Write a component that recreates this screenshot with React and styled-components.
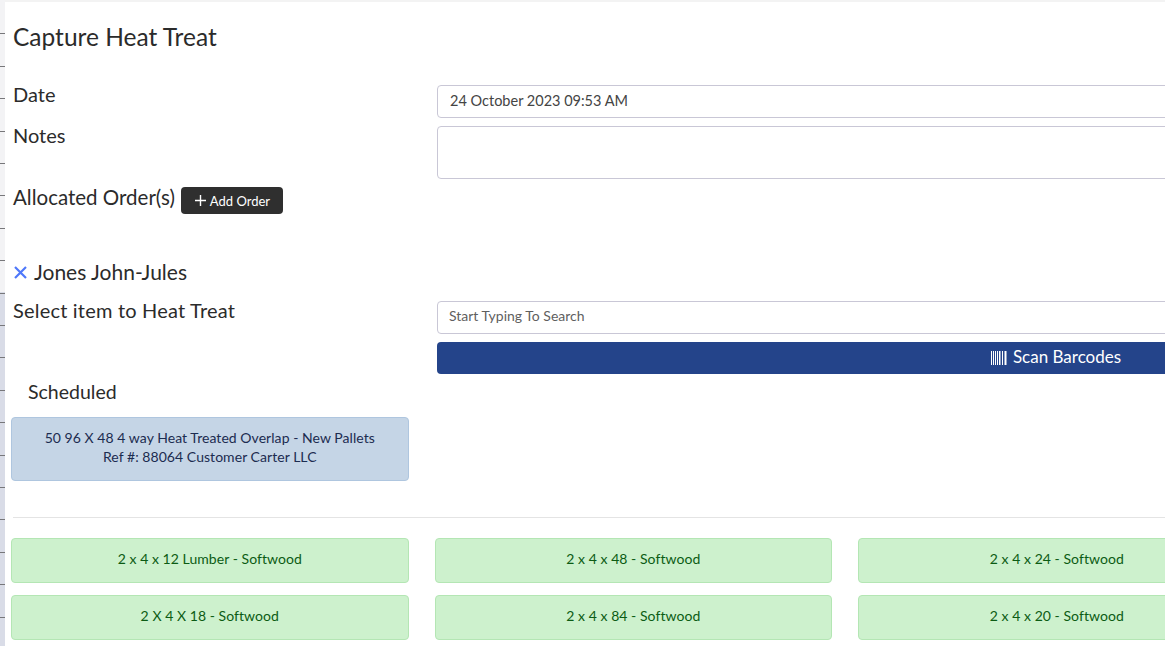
import React from 'react';
import styled, { createGlobalStyle } from 'styled-components';

const GlobalStyle = createGlobalStyle`
  html, body {
    margin: 0;
    height: 100%;
    overflow: hidden;
    background: #fff;
  }
  body {
    font-family: "Lato", "Noto Sans", sans-serif;
    color: #2b2b2b;
  }
`;

const Shell = styled.div`
  display: flex;
  width: 1700px;
  height: 646px;
  overflow: hidden;
`;

const SideStrip = styled.div`
  flex: 0 0 5px;
  background-image:
    repeating-linear-gradient(to bottom, transparent 0 31.4px, #77777a 31.4px 32.4px),
    linear-gradient(to bottom, #f3f3f5 0 292px, #d9dce7 292px 100%);
  background-position: 0 1.6px, 0 0;
  background-size: 100% 100%;
  background-repeat: no-repeat;
`;

const Main = styled.main`
  flex: 1;
  padding-top: 2px;
  background: linear-gradient(#f3f3f3, #f3f3f3) top / 100% 2px no-repeat #fff;
`;

const Title = styled.h1`
  margin: 0;
  padding: 20px 0 33px 8px;
  font-size: 24.5px;
  font-weight: 400;
  line-height: 30px;
`;

const FormRow = styled.div`
  display: grid;
  grid-template-columns: 424px 1238px;
  padding-left: 8px;
`;

const Label = styled.label`
  font-size: 20px;
  line-height: 18px;
  letter-spacing: ${p => p.$wide ? '0.2px' : '0'};
`;

const Field = styled.div`
  box-sizing: border-box;
  height: ${p => p.$h}px;
  margin-bottom: 8px;
  border: 1px solid #c9c7d6;
  border-radius: 4px;
  padding: 0 ${p => p.$muted ? 11 : 12}px ${p => p.$muted ? 4 : 2}px;
  display: flex;
  align-items: center;
  font-size: ${p => p.$muted ? 14 : 14.5}px;
  color: ${p => p.$muted ? '#5f5f5f' : '#444'};
`;

const AllocatedRow = styled.div`
  display: flex;
  align-items: flex-start;
  gap: 6px;
  height: 72px;
  padding-left: 8px;
  font-size: 20.5px;
  line-height: 20px;
`;

const AddButton = styled.button`
  display: inline-flex;
  align-items: center;
  gap: 4px;
  height: 27px;
  padding: 0 13px 0 14px;
  border: 0;
  border-radius: 4px;
  background: #2f2f2f;
  color: #fff;
  font: 400 13px "Lato", sans-serif;
`;

const OrderLine = styled.div`
  display: flex;
  align-items: center;
  gap: 7px;
  height: 26px;
  padding: 0 0 16px 9px;
  font-size: 21px;
  line-height: 26px;
`;

const ScanButton = styled.div`
  box-sizing: border-box;
  height: 32px;
  padding-bottom: 4px;
  border-radius: 4px;
  background: #24448a;
  color: #fff;
  font-size: 17px;
  display: flex;
  align-items: center;
  justify-content: center;
  gap: 5px;

  svg {
    margin-top: 4px;
  }
`;

const SubHeading = styled.h2`
  margin: 0;
  padding: 5px 0 12px 23px;
  font-size: 19.5px;
  font-weight: 400;
  line-height: 26px;
`;

const CardGrid = styled.div`
  display: grid;
  grid-template-columns: repeat(4, 397.5px);
  column-gap: 26px;
  row-gap: 12px;
  padding-left: 6px;
`;

const Card = styled.div`
  box-sizing: border-box;
  height: ${p => p.$blue ? 64 : 45}px;
  padding-bottom: ${p => p.$blue ? 4 : 5}px;
  border: 1px solid ${p => p.$blue ? '#afc6df' : '#b4e6b4'};
  border-radius: 4px;
  background: ${p => p.$blue ? '#c5d5e6' : '#cdf1cd'};
  color: ${p => p.$blue ? '#1c2c50' : '#0c5c14'};
  font-size: 14px;
  letter-spacing: 0.05px;
  line-height: 19px;
  text-align: center;
  display: flex;
  flex-direction: column;
  justify-content: center;
`;

const Divider = styled.hr`
  margin: 36px 0 20px 8px;
  border: 0;
  border-top: 1px solid #e4e4e4;
`;

const BarcodeIcon = () => (
  <svg width="17" height="14" viewBox="0 0 17 14" fill="#fff">
    <rect x="0" width="1" height="14" />
    <rect x="2" width="1" height="14" />
    <rect x="4" width="1" height="14" />
    <rect x="6" width="1" height="14" />
    <rect x="8" width="1.5" height="14" />
    <rect x="11" width="1" height="14" />
    <rect x="13.5" width="2" height="14" />
  </svg>
);

const PlusIcon = () => (
  <svg width="11" height="11" viewBox="0 0 11 11" stroke="#fff" strokeWidth="1.4">
    <path d="M5.5 0v11M0 5.5h11" />
  </svg>
);

const CrossIcon = () => (
  <svg width="13" height="13" viewBox="0 0 13 13" stroke="#4f78fa" strokeWidth="2.2">
    <path d="M1 1l11 11M12 1L1 12" />
  </svg>
);

const items = [
  '2 x 4 x 12 Lumber - Softwood',
  '2 x 4 x 48 - Softwood',
  '2 x 4 x 24 - Softwood',
  '',
  '2 X 4 X 18 - Softwood',
  '2 x 4 x 84 - Softwood',
  '2 x 4 x 20 - Softwood',
  '',
];

export default function App() {
  return (
    <Shell>
      <GlobalStyle />
      <SideStrip />
      <Main>
        <Title>Capture Heat Treat</Title>
        <FormRow>
          <Label>Date</Label>
          <Field $h={33}>24 October 2023 09:53 AM</Field>
        </FormRow>
        <FormRow>
          <Label>Notes</Label>
          <Field $h={53} />
        </FormRow>
        <AllocatedRow>
          Allocated Order(s)
          <AddButton>
            <PlusIcon /> Add Order
          </AddButton>
        </AllocatedRow>
        <OrderLine>
          <CrossIcon /> Jones John-Jules
        </OrderLine>
        <FormRow>
          <Label $wide>Select item to Heat Treat</Label>
          <div>
            <Field $h={33} $muted>Start Typing To Search</Field>
            <ScanButton><BarcodeIcon /> Scan Barcodes</ScanButton>
          </div>
        </FormRow>
        <SubHeading>Scheduled</SubHeading>
        <CardGrid>
          <Card $blue>
            <div>50 96 X 48 4 way Heat Treated Overlap - New Pallets</div>
            <div>Ref #: 88064 Customer Carter LLC</div>
          </Card>
        </CardGrid>
        <Divider />
        <CardGrid>
          {items.map((label, i) => label ? <Card key={i}>{label}</Card> : <span key={i} />)}
        </CardGrid>
      </Main>
    </Shell>
  );
}
